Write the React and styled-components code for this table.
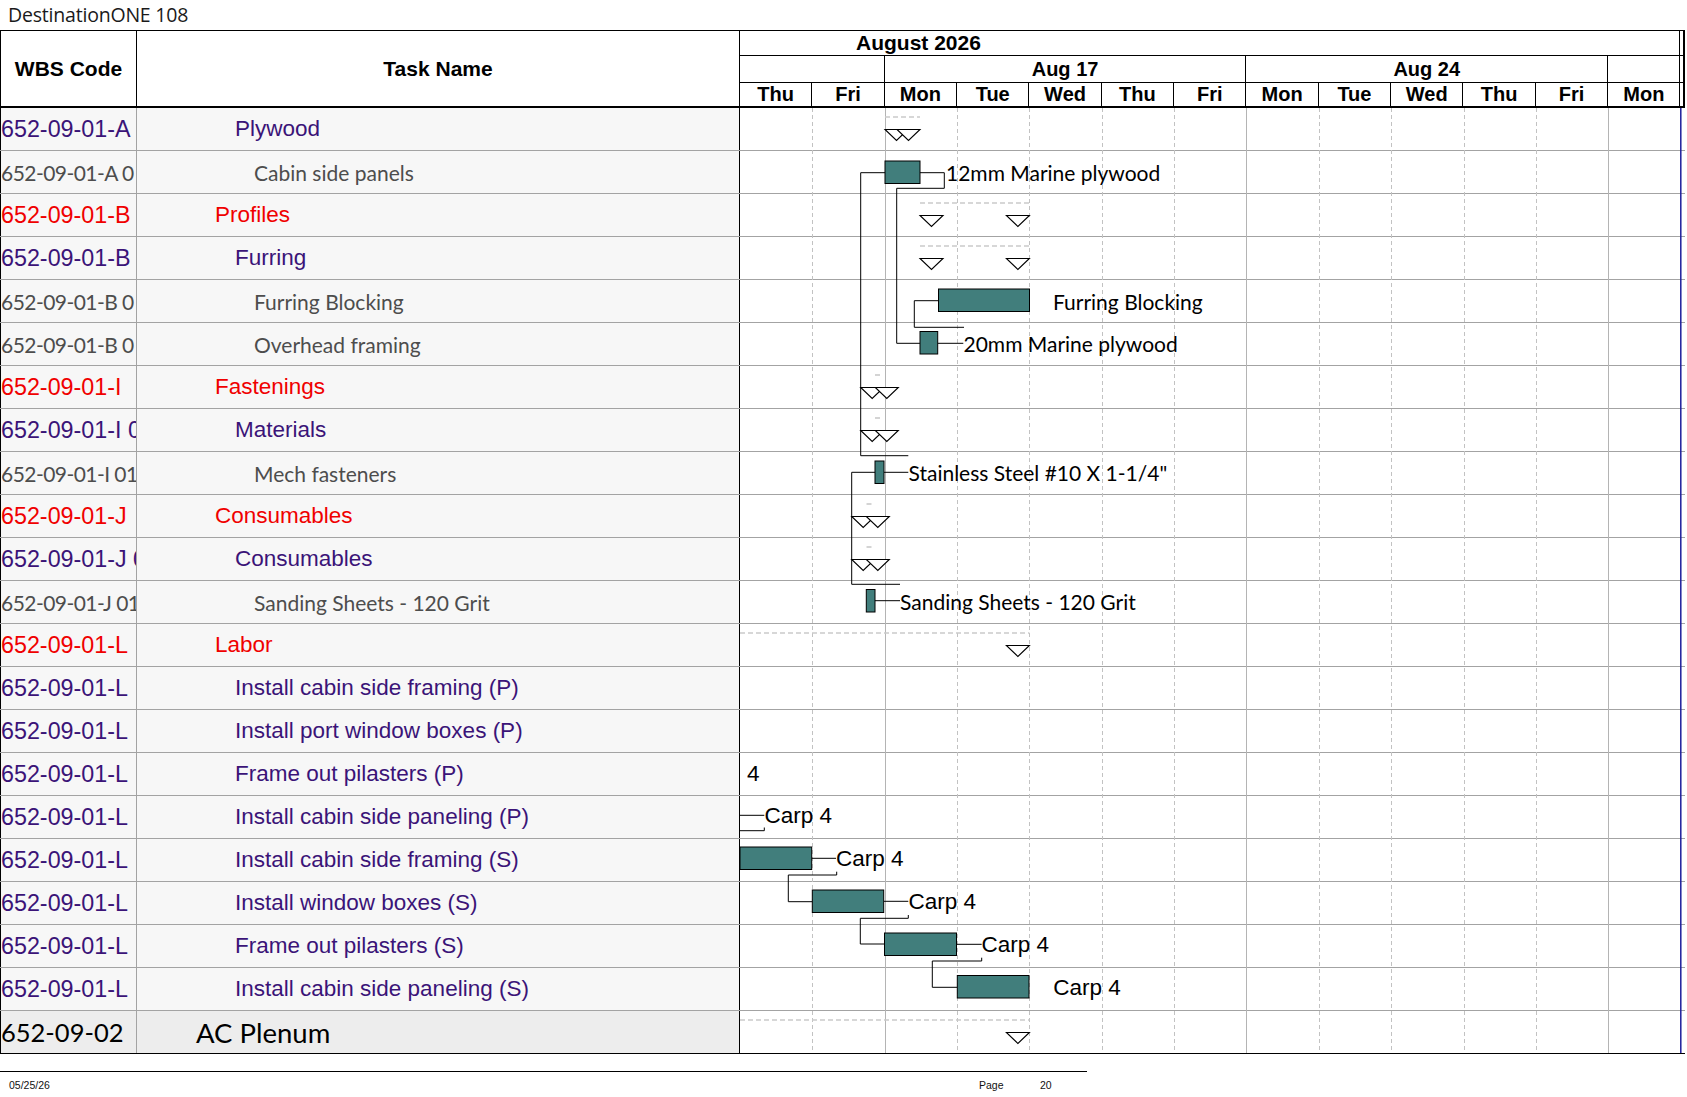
import React from 'react';
import styled, { createGlobalStyle } from 'styled-components';

const DAY = 72.35;
const ROW = 43;

const GlobalStyle = createGlobalStyle`
  html, body { margin: 0; padding: 0; background: #ffffff; }
  body { font-family: "Liberation Sans", Arial, sans-serif; color: #000000; }
`;

const Page = styled.div`
  width: 1687px;
  height: 1097px;
  overflow: hidden;
`;

const Title = styled.div`
  height: 30px;
  line-height: 30px;
  padding-left: 8px;
  font-family: "Open Sans", sans-serif;
  font-size: 19.5px;
  letter-spacing: -0.2px;
  color: #1a1a1a;
`;

const Sheet = styled.div`
  width: 1685px;
`;

const HeaderRow = styled.div`
  display: grid;
  grid-template-columns: 137px 603px 1fr;
  height: 78px;
  box-sizing: border-box;
  border-top: 1px solid #000;
  border-bottom: 2px solid #000;
`;

const HeadCell = styled.div`
  display: flex;
  align-items: center;
  justify-content: center;
  border-right: 1px solid #000;
  border-left: ${p => (p.$first ? '1px solid #000' : 'none')};
  font-weight: bold;
  font-size: 21px;
`;

const Timescale = styled.div`
  display: grid;
  grid-template-columns: repeat(13, ${DAY}px) 1fr;
  grid-template-rows: 25px 27px 23px;
  border-right: 1px solid #000;
`;

const TierCell = styled.div`
  grid-column: span ${p => p.$span || 1};
  box-sizing: border-box;
  border-right: 1px solid #000;
  border-bottom: ${p => (p.$bottom ? '1px solid #000' : 'none')};
  display: flex;
  align-items: center;
  justify-content: ${p => (p.$left ? 'flex-start' : 'center')};
  padding-left: ${p => p.$left || 0}px;
  font-weight: bold;
  font-size: ${p => (p.$month ? 21 : 20)}px;
  white-space: nowrap;
`;

const Body = styled.div`
  position: relative;
`;

const Row = styled.div`
  display: grid;
  grid-template-columns: 137px 603px 1fr;
  height: ${ROW}px;
  box-sizing: border-box;
  border-bottom: 1px solid ${p => (p.$last ? '#000' : '#a3a3a3')};
`;

const tones = {
  purple: { color: '#3b1478', family: '"Liberation Sans", Arial, sans-serif', code: 23.3, name: 22.5, spacing: 0 },
  red: { color: '#f00000', family: '"Liberation Sans", Arial, sans-serif', code: 23.3, name: 22.5, spacing: 0 },
  gray: { color: '#4d4d4d', family: 'Lato, "Open Sans", sans-serif', code: 21, name: 21, spacing: -0.55 },
  total: { color: '#000000', family: 'Lato, "Open Sans", sans-serif', code: 25.5, name: 27.5, spacing: 0 },
};

const CodeCell = styled.div`
  display: flex;
  align-items: center;
  overflow: hidden;
  white-space: nowrap;
  border-left: 1px solid #000;
  border-right: 1px solid #a3a3a3;
  background: ${p => (p.$tone === 'total' ? '#ededed' : '#f7f7f7')};
  color: ${p => tones[p.$tone].color};
  font-family: ${p => tones[p.$tone].family};
  font-size: ${p => tones[p.$tone].code}px;
  letter-spacing: ${p => tones[p.$tone].spacing}px;
`;

const NameCell = styled(CodeCell)`
  border-left: none;
  border-right: 1px solid #000;
  padding-left: ${p => [59, 78, 98, 117][p.$level]}px;
  font-size: ${p => tones[p.$tone].name}px;
  letter-spacing: 0;
`;

const ChartCell = styled.div`
  background: #ffffff;
`;

const Overlay = styled.svg`
  position: absolute;
  left: 740px;
  top: 0;
  width: 945px;
  height: ${22 * ROW}px;
  overflow: visible;
  pointer-events: none;
`;

const Footer = styled.div`
  margin-top: 17px;
  width: 1087px;
  border-top: 1px solid #000;
  display: grid;
  grid-template-columns: 979px 61px auto;
  padding-top: 7px;
  font-size: 10.5px;
  color: #111;
`;

const FootDate = styled.span`
  padding-left: 9px;
`;

const rows = [
  { code: '652-09-01-A', name: 'Plywood', tone: 'purple', level: 2 },
  { code: '652-09-01-A 0', name: 'Cabin side panels', tone: 'gray', level: 3 },
  { code: '652-09-01-B', name: 'Profiles', tone: 'red', level: 1 },
  { code: '652-09-01-B', name: 'Furring', tone: 'purple', level: 2 },
  { code: '652-09-01-B 0', name: 'Furring Blocking', tone: 'gray', level: 3 },
  { code: '652-09-01-B 0', name: 'Overhead framing', tone: 'gray', level: 3 },
  { code: '652-09-01-I', name: 'Fastenings', tone: 'red', level: 1 },
  { code: '652-09-01-I 0', name: 'Materials', tone: 'purple', level: 2 },
  { code: '652-09-01-I 01', name: 'Mech fasteners', tone: 'gray', level: 3 },
  { code: '652-09-01-J', name: 'Consumables', tone: 'red', level: 1 },
  { code: '652-09-01-J 0', name: 'Consumables', tone: 'purple', level: 2 },
  { code: '652-09-01-J 01', name: 'Sanding Sheets - 120 Grit', tone: 'gray', level: 3 },
  { code: '652-09-01-L', name: 'Labor', tone: 'red', level: 1 },
  { code: '652-09-01-L', name: 'Install cabin side framing (P)', tone: 'purple', level: 2 },
  { code: '652-09-01-L', name: 'Install port window boxes (P)', tone: 'purple', level: 2 },
  { code: '652-09-01-L', name: 'Frame out pilasters (P)', tone: 'purple', level: 2 },
  { code: '652-09-01-L', name: 'Install cabin side paneling (P)', tone: 'purple', level: 2 },
  { code: '652-09-01-L', name: 'Install cabin side framing (S)', tone: 'purple', level: 2 },
  { code: '652-09-01-L', name: 'Install window boxes (S)', tone: 'purple', level: 2 },
  { code: '652-09-01-L', name: 'Frame out pilasters (S)', tone: 'purple', level: 2 },
  { code: '652-09-01-L', name: 'Install cabin side paneling (S)', tone: 'purple', level: 2 },
  { code: '652-09-02', name: 'AC Plenum', tone: 'total', level: 0 },
];

const days = ['Thu', 'Fri', 'Mon', 'Tue', 'Wed', 'Thu', 'Fri', 'Mon', 'Tue', 'Wed', 'Thu', 'Fri', 'Mon'];

// summary rows: start/end triangles and the grey dashed span above them
const summaries = [
  { row: 0, s: 145, e: 180, dash: [145, 180] },
  { row: 2, s: 180, e: 289.4, dash: [180, 289.4] },
  { row: 3, s: 180, e: 289.4, dash: [180, 289.4] },
  { row: 6, s: 120.7, e: 158.3, dash: [135, 142] },
  { row: 7, s: 120.7, e: 158.3, dash: [135, 142] },
  { row: 9, s: 111.7, e: 149.3, dash: [126.5, 133.5] },
  { row: 10, s: 111.7, e: 149.3, dash: [126.5, 133.5] },
  { row: 12, s: null, e: 289.4, dash: [0, 289.4] },
  { row: 21, s: null, e: 289.4, dash: [0, 289.4] },
];

const bars = [
  { row: 1, x: 145, w: 35, y: 10 },
  { row: 4, x: 198.5, w: 91, y: 9 },
  { row: 5, x: 180, w: 17.7, y: 8.5 },
  { row: 8, x: 135, w: 9, y: 9 },
  { row: 11, x: 126.3, w: 8.7, y: 8.5 },
  { row: 17, x: 0, w: 71.7, y: 8 },
  { row: 18, x: 72.3, w: 71.4, y: 8 },
  { row: 19, x: 144.5, w: 72, y: 8 },
  { row: 20, x: 217.3, w: 71.7, y: 7.5 },
];

const labels = [
  { row: 1, x: 206, text: '12mm Marine plywood', cy: 21.5 },
  { row: 4, x: 313, text: 'Furring Blocking', cy: 21 },
  { row: 5, x: 223.5, text: '20mm Marine plywood', cy: 20.5 },
  { row: 8, x: 168.5, text: 'Stainless Steel #10 X 1-1/4"', cy: 20.5 },
  { row: 11, x: 160, text: 'Sanding Sheets - 120 Grit', cy: 20 },
  { row: 15, x: 7, text: '4', cy: 20, arial: true },
  { row: 16, x: 24.5, text: 'Carp 4', cy: 19.5, arial: true },
  { row: 17, x: 96, text: 'Carp 4', cy: 19.5, arial: true },
  { row: 18, x: 168.5, text: 'Carp 4', cy: 19.5, arial: true },
  { row: 19, x: 241.5, text: 'Carp 4', cy: 19.5, arial: true },
  { row: 20, x: 313.3, text: 'Carp 4', cy: 19.5, arial: true },
];

const links = [
  [[180, 64.7], [204.3, 64.7], [204.3, 80.3], [156.7, 80.3], [156.7, 235.3], [180, 235.3]],
  [[145, 64.7], [120.7, 64.7], [120.7, 347.7], [168.3, 347.7]],
  [[198.5, 192.7], [174.3, 192.7], [174.3, 219.3], [224, 219.3]],
  [[197.7, 235.3], [223.3, 235.3]],
  [[144, 364.3], [168.3, 364.3]],
  [[135, 364.3], [111.7, 364.3], [111.7, 476.3], [160, 476.3]],
  [[135, 492.7], [160, 492.7]],
  [[0, 707.3], [24.3, 707.3]],
  [[0, 722.7], [24.3, 722.7], [24.3, 719.5]],
  [[71.7, 750.3], [96, 750.3]],
  [[96.7, 763.7], [96.7, 767], [48.3, 767], [48.3, 793.7], [72.3, 793.7]],
  [[143.7, 793.3], [168.3, 793.3]],
  [[168.3, 807], [168.3, 810.3], [120.3, 810.3], [120.3, 836], [144.3, 836]],
  [[216.7, 836.3], [241.7, 836.3]],
  [[241.7, 849.7], [241.7, 853], [192.3, 853], [192.3, 879.3], [217.3, 879.3]],
];

const Tri = ({ x, y }) => (
  <polygon
    points={`${x},${y} ${x + 23},${y} ${x + 11.5},${y + 11}`}
    fill="#fff"
    stroke="#000"
    strokeWidth="1.1"
  />
);

const GanttDrawing = () => (
  <Overlay viewBox={`0 0 945 ${22 * ROW}`}>
    {Array.from({ length: 12 }, (_, i) => {
      const k = i + 1;
      const solid = k === 2 || k === 7 || k === 12;
      const x = Math.round(k * DAY) + 0.5;
      return (
        <line
          key={k}
          x1={x}
          x2={x}
          y1={0}
          y2={22 * ROW - 1}
          stroke={solid ? '#b4b4b4' : '#c2c2c2'}
          strokeDasharray={solid ? undefined : '4 3'}
          strokeWidth="1"
        />
      );
    })}
    <line x1={940.8} x2={940.8} y1={0} y2={22 * ROW - 1} stroke="#1d1d9b" strokeWidth="1.5" />

    {summaries.map(s => {
      const top = s.row * ROW;
      return (
        <g key={s.row}>
          <line
            x1={s.dash[0]}
            x2={s.dash[1]}
            y1={top + 9}
            y2={top + 9}
            stroke="#cacaca"
            strokeWidth="1.6"
            strokeDasharray="5 3"
          />
          {s.s !== null && <Tri x={s.s} y={top + 21.5} />}
          <Tri x={s.e - 23} y={top + 21.5} />
        </g>
      );
    })}

    {links.map((pts, i) => (
      <polyline
        key={i}
        points={pts.map(p => p.join(',')).join(' ')}
        fill="none"
        stroke="#000"
        strokeWidth="1"
      />
    ))}

    {bars.map(b => (
      <rect
        key={b.row}
        x={b.x}
        y={b.row * ROW + b.y}
        width={b.w}
        height={22.5}
        fill="#417e7c"
        stroke="#000"
        strokeWidth="1"
      />
    ))}

    {labels.map(l => (
      <text
        key={l.row}
        x={l.x}
        y={l.row * ROW + l.cy}
        dominantBaseline="central"
        fontFamily={l.arial ? '"Liberation Sans", Arial, sans-serif' : 'Lato, "Open Sans", sans-serif'}
        fontSize={l.arial ? 22.5 : 21}
        fill="#000"
      >
        {l.text}
      </text>
    ))}
  </Overlay>
);

const App = () => (
  <Page>
    <GlobalStyle />
    <Title>DestinationONE 108</Title>
    <Sheet>
      <HeaderRow>
        <HeadCell $first>WBS Code</HeadCell>
        <HeadCell>Task Name</HeadCell>
        <Timescale>
          <TierCell $span={13} $bottom $left={116} $month>August 2026</TierCell>
          <TierCell $bottom />
          <TierCell $span={2} $bottom />
          <TierCell $span={5} $bottom>Aug 17</TierCell>
          <TierCell $span={5} $bottom>Aug 24</TierCell>
          <TierCell $bottom />
          <TierCell $bottom />
          {days.map((d, i) => (
            <TierCell key={i}>{d}</TierCell>
          ))}
          <TierCell />
        </Timescale>
      </HeaderRow>

      <Body>
        {rows.map((r, i) => (
          <Row key={i} $last={i === rows.length - 1}>
            <CodeCell $tone={r.tone}>{r.code}</CodeCell>
            <NameCell $tone={r.tone} $level={r.level}>{r.name}</NameCell>
            <ChartCell />
          </Row>
        ))}
        <GanttDrawing />
      </Body>
    </Sheet>

    <Footer>
      <FootDate>05/25/26</FootDate>
      <span>Page</span>
      <span>20</span>
    </Footer>
  </Page>
);

export default App;
